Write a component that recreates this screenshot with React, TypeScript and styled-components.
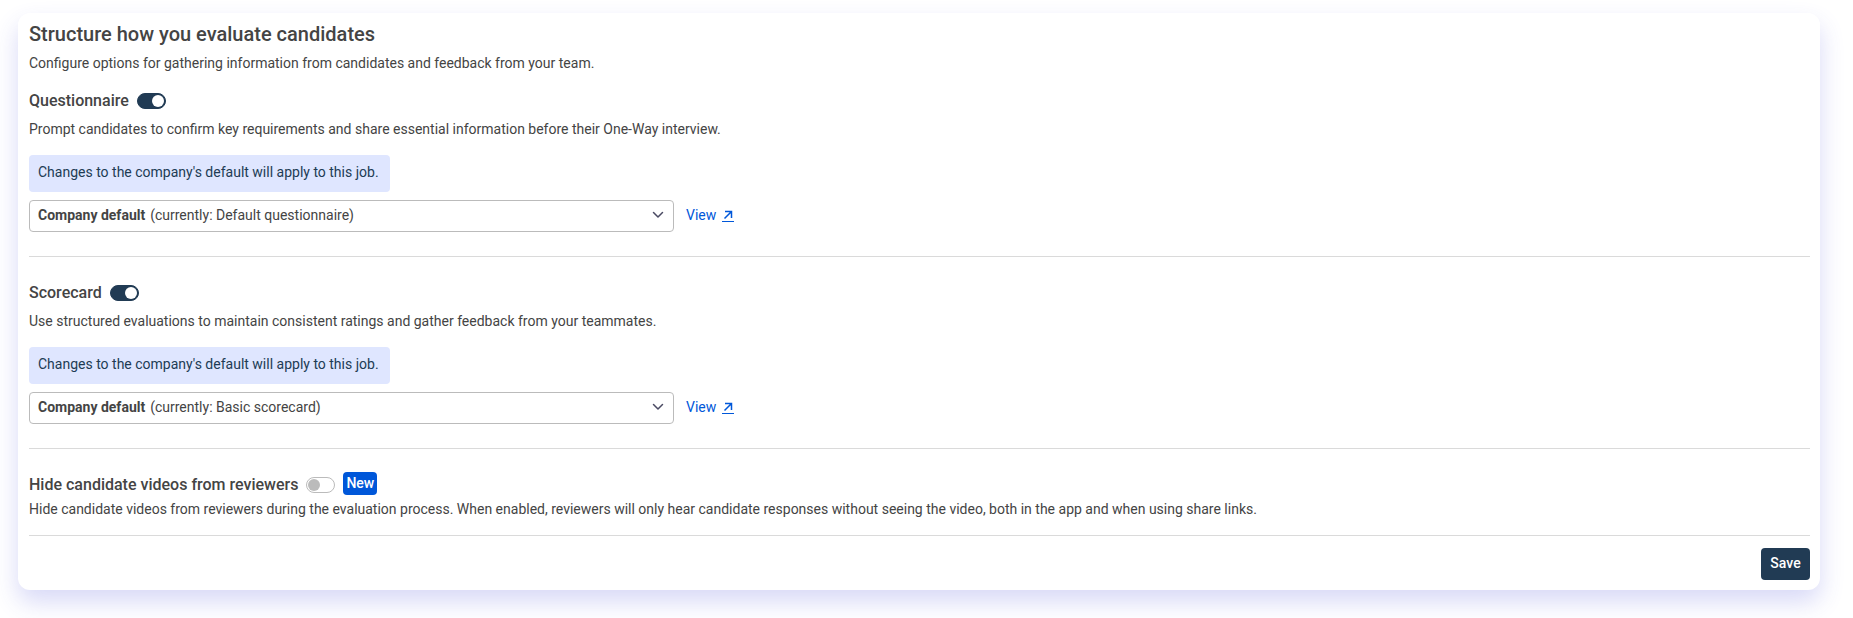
import React, { useState } from "react";
import styled, { createGlobalStyle } from "styled-components";

const GlobalStyle = createGlobalStyle`
  *, *::before, *::after { box-sizing: border-box; }
  body {
    margin: 0;
    background: #fff;
    color: #444;
    font-family: Roboto, "Liberation Sans", sans-serif;
    font-size: 14px;
    line-height: 20px;
  }
`;

const Page = styled.main`
  padding: 13px 33px 28px 18px;
`;

const Card = styled.form`
  display: flex;
  flex-direction: column;
  padding: 9px 10px 10px 11px;
  border-radius: 12px;
  background: #fff;
  box-shadow: 0 12px 24px rgba(60, 64, 214, 0.2);
`;

const Title = styled.h1`
  margin: 0;
  font-size: 20px;
  line-height: 24px;
  font-weight: 500;
`;

const Intro = styled.p`
  margin: 7px 0 15px;
`;

const Section = styled.section`
  display: flex;
  flex-direction: column;
  align-items: flex-start;
`;

const HeadingRow = styled.div`
  display: flex;
  align-items: center;
  gap: 8px;
  height: 24px;
`;

const Heading = styled.h2`
  margin: 0;
  padding-top: 2px;
  font-size: 16px;
  line-height: 24px;
  font-weight: 500;
`;

const Switch = styled.input`
  appearance: none;
  display: flex;
  align-items: center;
  width: 29px;
  height: 16px;
  margin: 2px 0 0;
  padding: 0 1px;
  border: 1px solid #bbb;
  border-radius: 8px;
  background: #fff;
  cursor: pointer;

  &::before {
    content: "";
    width: 12px;
    height: 12px;
    border-radius: 50%;
    background: #bbb;
  }

  &:checked {
    justify-content: flex-end;
    border-color: #213b54;
    background: #213b54;
  }

  &:checked::before {
    background: #fff;
  }
`;

const Badge = styled.span`
  margin-bottom: 1px;
  padding: 0 3px 1px;
  border-radius: 4px;
  background: #0057d9;
  color: #fff;
  font-weight: 500;
  line-height: 22px;
`;

const Description = styled.p<{ $tight?: boolean }>`
  margin: ${(p) => (p.$tight ? "3px 0 0" : "7px 0 0")};
`;

const Notice = styled.p`
  margin: 16px 0 8px;
  padding: 7px 11px 10px 9px;
  border-radius: 4px;
  background: #dfe6ff;
  color: #213b54;
`;

const PickerRow = styled.div`
  display: flex;
  align-items: center;
  gap: 12px;
  width: 100%;
`;

const Picker = styled.div`
  display: grid;
  align-items: center;
  flex: 0 1 645px;
  min-width: 0;

  & > * { grid-area: 1 / 1; }
`;

const Select = styled.select`
  appearance: none;
  width: 100%;
  height: 32px;
  padding: 0 32px 0 9px;
  border: 1px solid #bbb;
  border-radius: 4px;
  background: #fff;
  color: transparent;
  font: inherit;
  cursor: pointer;

  option { color: #444; }
`;

const PickerValue = styled.span`
  display: flex;
  align-items: center;
  gap: 5px;
  padding: 0 10px 2px 9px;
  pointer-events: none;
  z-index: 1;

  svg { margin-left: auto; }
`;

const ViewLink = styled.a`
  display: inline-flex;
  align-items: center;
  gap: 6px;
  padding-bottom: 2px;
  color: #0057d9;
  text-decoration: none;

  svg { margin-top: 2px; }
`;

const Divider = styled.hr<{ $gap: string }>`
  width: 100%;
  height: 1px;
  margin: ${(p) => p.$gap};
  border: 0;
  background: #dadada;
`;

const SaveButton = styled.button`
  align-self: flex-end;
  min-width: 49px;
  height: 32px;
  padding: 0 9px 2px;
  border: 0;
  border-radius: 4px;
  background: #213b54;
  color: #fff;
  font: inherit;
  font-weight: 500;
  cursor: pointer;
`;

const Chevron = () => (
  <svg width="12" height="8" viewBox="0 0 12 8" fill="none" aria-hidden="true">
    <path d="M1.5 1.5 6 6l4.5-4.5" stroke="#4a4a63" strokeWidth="1.5" strokeLinecap="round" strokeLinejoin="round" />
  </svg>
);

const OpenIcon = () => (
  <svg width="12" height="12" viewBox="0 0 12 12" fill="none" stroke="#0057d9" aria-hidden="true">
    <path d="M2.5 8.5 9 2M3 1.5h6.5V8" strokeWidth="1.5" />
    <path d="M0 11.5h12" />
  </svg>
);

interface TemplateProps {
  id: string;
  heading: string;
  description: string;
  current: string;
}

function TemplateSection({ id, heading, description, current }: TemplateProps) {
  const [enabled, setEnabled] = useState(true);
  return (
    <Section>
      <HeadingRow>
        <Heading>
          <label htmlFor={`${id}-switch`}>{heading}</label>
        </Heading>
        <Switch
          id={`${id}-switch`}
          type="checkbox"
          role="switch"
          checked={enabled}
          onChange={(e) => setEnabled(e.target.checked)}
        />
      </HeadingRow>
      <Description>{description}</Description>
      <Notice>Changes to the company's default will apply to this job.</Notice>
      <PickerRow>
        <Picker>
          <Select id={`${id}-select`} aria-label={heading} defaultValue="default">
            <option value="default">Company default (currently: {current})</option>
          </Select>
          <PickerValue aria-hidden="true">
            <b>Company default</b>
            <span>(currently: {current})</span>
            <Chevron />
          </PickerValue>
        </Picker>
        <ViewLink href={`#${id}`}>
          View
          <OpenIcon />
        </ViewLink>
      </PickerRow>
    </Section>
  );
}

export default function App() {
  const [hidden, setHidden] = useState(false);
  return (
    <>
      <GlobalStyle />
      <Page>
        <Card onSubmit={(e) => e.preventDefault()}>
          <Title>Structure how you evaluate candidates</Title>
          <Intro>Configure options for gathering information from candidates and feedback from your team.</Intro>
          <TemplateSection
            id="questionnaire"
            heading="Questionnaire"
            description="Prompt candidates to confirm key requirements and share essential information before their One-Way interview."
            current="Default questionnaire"
          />
          <Divider $gap="24px 0 23px" />
          <TemplateSection
            id="scorecard"
            heading="Scorecard"
            description="Use structured evaluations to maintain consistent ratings and gather feedback from your teammates."
            current="Basic scorecard"
          />
          <Divider $gap="24px 0 23px" />
          <Section>
            <HeadingRow>
              <Heading>
                <label htmlFor="hide-switch">Hide candidate videos from reviewers</label>
              </Heading>
              <Switch
                id="hide-switch"
                type="checkbox"
                role="switch"
                checked={hidden}
                onChange={(e) => setHidden(e.target.checked)}
              />
              <Badge>New</Badge>
            </HeadingRow>
            <Description $tight>
              Hide candidate videos from reviewers during the evaluation process. When enabled, reviewers will only
              hear candidate responses without seeing the video, both in the app and when using share links.
            </Description>
          </Section>
          <Divider $gap="16px 0 12px" />
          <SaveButton type="submit">Save</SaveButton>
        </Card>
      </Page>
    </>
  );
}
